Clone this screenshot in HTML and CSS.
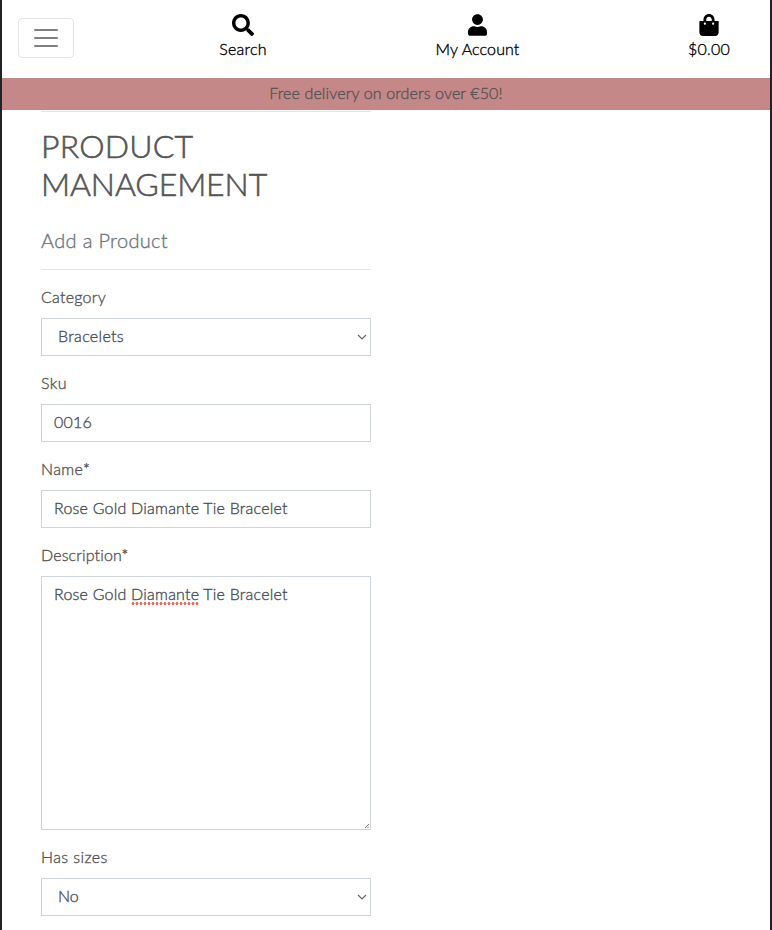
FILE: index.html
```html
<!DOCTYPE html>
<html lang="en">
<head>
<meta charset="utf-8">
<title>Product Management</title>
<link rel="stylesheet" href="styles.css">
</head>
<body>
<header class="topbar">
  <button class="toggler" aria-label="Menu"><svg width="30" height="30" viewBox="0 0 30 30"><path d="M4 7h22M4 15h22M4 23h22" stroke="rgba(0,0,0,.5)" stroke-width="2" stroke-linecap="round"/></svg></button>
  <a class="nav search"><svg width="22" height="22" viewBox="0 0 512 512"><path d="M505 442.7L405.300 343c-4.500-4.500-10.600-7-17-7H372c27.600-35.300 44-79.700 44-128C416 93.100 322.900 0 208 0S0 93.100 0 208s93.100 208 208 208c48.300 0 92.700-16.400 128-44v16.300c0 6.400 2.500 12.500 7 17l99.700 99.700c9.400 9.400 24.600 9.400 33.900 0l28.300-28.300c9.400-9.400 9.400-24.600.1-34zM208 336c-70.700 0-128-57.200-128-128 0-70.700 57.200-128 128-128 70.700 0 128 57.200 128 128 0 70.700-57.200 128-128 128z"/></svg><span class="t-search">Search</span></a>
  <a class="nav account"><svg width="19" height="22" viewBox="0 0 448 512"><path d="M224 256c70.700 0 128-57.300 128-128S294.700 0 224 0 96 57.300 96 128s57.300 128 128 128zm89.600 32h-16.700c-22.200 10.200-46.900 16-72.900 16s-50.600-5.800-72.900-16h-16.700C60.200 288 0 348.200 0 422.400V464c0 26.500 21.500 48 48 48h352c26.500 0 48-21.500 48-48v-41.600c0-74.200-60.200-134.400-134.400-134.400z"/></svg><span class="t-account">My Account</span></a>
  <a class="nav bag"><svg width="20" height="22" viewBox="0 0 448 512"><path d="M352 160v-32C352 57.420 294.579 0 224 0 153.420 0 96 57.420 96 128v32H0v272c0 44.183 35.817 80 80 80h288c44.183 0 80-35.817 80-80V160h-96zm-192-32c0-35.290 28.710-64 64-64s64 28.710 64 64v32H160v-32zm160 120c-13.255 0-24-10.745-24-24s10.745-24 24-24 24 10.745 24 24-10.745 24-24 24zm-192 0c-13.255 0-24-10.745-24-24s10.745-24 24-24 24 10.745 24 24-10.745 24-24 24z"/></svg><span class="t-total">$0.00</span></a>
</header>
<div class="banner"><span class="t-banner">Free delivery on orders over €50!</span></div>
<main class="content">
  <hr>
  <h2><span class="t-product">PRODUCT</span><br><span class="t-management">MANAGEMENT</span></h2>
  <h5><span class="t-add">Add a Product</span></h5>
  <hr class="divider">
  <form>
    <label><span class="t-category">Category</span></label>
    <div class="control select"><span class="t-bracelets">Bracelets</span><svg class="chevron" width="10" height="6" viewBox="0 0 10 6"><path d="M1 1l4 4 4-4"/></svg></div>
    <label><span class="t-sku">Sku</span></label>
    <div class="control"><span class="t-code">0016</span></div>
    <label><span class="t-name">Name*</span></label>
    <div class="control"><span class="t-value">Rose Gold Diamante Tie Bracelet</span></div>
    <label><span class="t-description">Description*</span></label>
    <div class="control area"><span class="t-value">Rose Gold <span class="misspelt">Diamante</span> Tie Bracelet</span><svg class="grip" width="4" height="4" viewBox="0 0 4 4"><path d="M0 4l4-4M2.500 4L4 2.500"/></svg></div>
    <label><span class="t-sizes">Has sizes</span></label>
    <div class="control select"><span class="t-no">No</span><svg class="chevron" width="10" height="6" viewBox="0 0 10 6"><path d="M1 1l4 4 4-4"/></svg></div>
  </form>
</main>
</body>
</html>
```
FILE: styles.css
```css
* { box-sizing: border-box; }
body {
  margin: 0;
  height: 930px;
  overflow: hidden;
  border: solid #222226;
  border-width: 0 2px;
  background: #fff;
  color: #555;
  font: 300 16px/24px Lato, "Noto Sans", sans-serif;
  font-variant-ligatures: none;
  -webkit-text-stroke: .35px currentColor;
}
.topbar {
  display: grid;
  grid-template-columns: 124px 234px 235px 1fr;
  height: 78px;
  color: #000;
}
.toggler {
  width: 56px;
  height: 40px;
  margin: 18px 0 0 16px;
  padding: 4px 12px;
  border: 1px solid rgba(0,0,0,.1);
  border-radius: 4px;
  background: none;
}
.toggler svg { display: block; }
.nav {
  display: flex;
  flex-direction: column;
  align-items: center;
  padding-top: 14px;
}
.nav svg { display: block; margin-bottom: 1px; }
.bag { padding-left: 53px; }
.banner {
  height: 32px;
  padding-top: 3px;
  background: #c48888;
  text-align: center;
}
.content { width: 330px; margin-left: 39px; }
hr { height: 1px; margin: 1px 0 15px; border: 0; background: #e5e5e5; }
h2 {
  margin: 0 0 25px;
  font-size: 32px;
  line-height: 38px;
  font-weight: 300;
  -webkit-text-stroke-width: .6px;
}
h5 { margin: 0; color: #6c757d; font-size: 20px; line-height: 24px; font-weight: 300; }
hr.divider { margin: 17px 0 15px; }
label { display: block; margin-bottom: 9px; }
.control {
  display: flex;
  position: relative;
  height: 38px;
  margin-bottom: 15px;
  padding: 5px 12px 7px;
  border: 1px solid #ced4da;
  color: #495057;
  white-space: pre;
}
.select { padding: 5px 3px 7px 16px; justify-content: space-between; }
.area { height: 254px; }
.chevron { margin-top: 10px; }
.chevron path { fill: none; stroke: #666; stroke-width: 1.2; }
.grip { position: absolute; right: 1px; bottom: 1px; }
.grip path { stroke: #555; stroke-width: .8; }
.misspelt { position: relative; }
.misspelt::after {
  content: "";
  position: absolute;
  left: 0;
  right: 0;
  bottom: -2px;
  height: 3px;
  background: radial-gradient(circle, #f06a60 1.3px, transparent 1.7px) 0 0 / 4px 3px repeat-x;
}
.t-value { letter-spacing: .22px; }
.t-search, .t-total, .t-code, .t-category { letter-spacing: .25px; }
.t-account { letter-spacing: .12px; }
.t-banner { letter-spacing: .13px; }
.t-product { letter-spacing: .2px; }
.t-management { letter-spacing: -.1px; }
.t-add, .t-bracelets { letter-spacing: .33px; }
.t-sku, .t-name, .t-sizes { letter-spacing: .4px; }
.t-description { letter-spacing: .13px; }
```
